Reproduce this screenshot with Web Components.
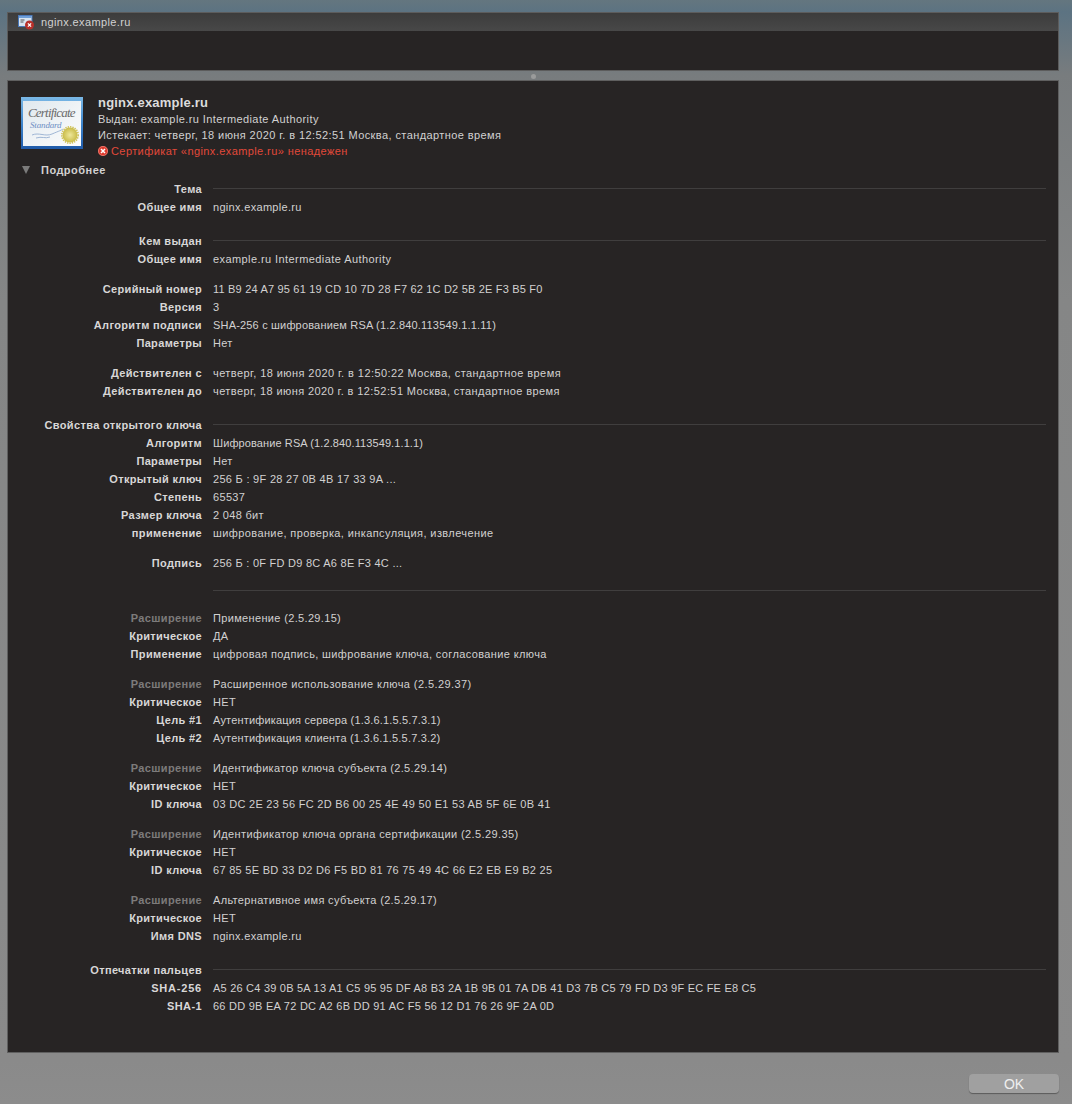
<!DOCTYPE html>
<html lang="ru">
<head>
<meta charset="utf-8">
<title>nginx.example.ru</title>
<style>
  html, body { margin: 0; height: 1104px; overflow: hidden; }
  body {
    font: 11px "Liberation Sans", Arial, sans-serif;
    color: #d2d1d1;
    background:
      linear-gradient(180deg, #64767f 0, #5c7382 12px, #787c7e 75px, #858686 300px, #8a8a8a 1060px, #8c8c8c 100%);
  }
</style>
</head>
<body>
<cert-sheet>
  <cert-tab slot="tab">nginx.example.ru</cert-tab>

  <cert-summary slot="head"
    name="nginx.example.ru"
    issuer="Выдан: example.ru Intermediate Authority"
    expires="Истекает: четверг, 18 июня 2020 г. в 12:52:51 Москва, стандартное время"
    error="Сертификат «nginx.example.ru» ненадежен"></cert-summary>
  <cert-disclosure slot="head">Подробнее</cert-disclosure>

  <cert-row head label="Тема"></cert-row>
  <cert-row t=".31" label="Общее имя">nginx.example.ru</cert-row>

  <cert-row head gap="16" label="Кем выдан"></cert-row>
  <cert-row t=".42" label="Общее имя">example.ru Intermediate Authority</cert-row>

  <cert-row gap="12" t=".19" label="Серийный номер">11 B9 24 A7 95 61 19 CD 10 7D 28 F7 62 1C D2 5B 2E F3 B5 F0</cert-row>
  <cert-row label="Версия">3</cert-row>
  <cert-row t=".18" label="Алгоритм подписи">SHA-256 с шифрованием RSA (1.2.840.113549.1.1.11)</cert-row>
  <cert-row label="Параметры">Нет</cert-row>

  <cert-row gap="12" t=".43" label="Действителен с">четверг, 18 июня 2020 г. в 12:50:22 Москва, стандартное время</cert-row>
  <cert-row t=".41" label="Действителен до">четверг, 18 июня 2020 г. в 12:52:51 Москва, стандартное время</cert-row>

  <cert-row head gap="16" label="Свойства открытого ключа"></cert-row>
  <cert-row t=".1" label="Алгоритм">Шифрование RSA (1.2.840.113549.1.1.1)</cert-row>
  <cert-row label="Параметры">Нет</cert-row>
  <cert-row t=".29" label="Открытый ключ">256 Б : 9F 28 27 0B 4B 17 33 9A ...</cert-row>
  <cert-row label="Степень">65537</cert-row>
  <cert-row label="Размер ключа">2 048 бит</cert-row>
  <cert-row t=".4" label="применение">шифрование, проверка, инкапсуляция, извлечение</cert-row>

  <cert-row gap="12" t=".26" label="Подпись">256 Б : 0F FD D9 8C A6 8E F3 4C ...</cert-row>
  <cert-row head gap="10" label=""></cert-row>

  <cert-row gap="9" muted t=".34" label="Расширение">Применение (2.5.29.15)</cert-row>
  <cert-row label="Критическое">ДА</cert-row>
  <cert-row t=".38" label="Применение">цифровая подпись, шифрование ключа, согласование ключа</cert-row>

  <cert-row gap="12" muted t=".42" label="Расширение">Расширенное использование ключа (2.5.29.37)</cert-row>
  <cert-row label="Критическое">НЕТ</cert-row>
  <cert-row t=".17" label="Цель #1">Аутентификация сервера (1.3.6.1.5.5.7.3.1)</cert-row>
  <cert-row t=".19" label="Цель #2">Аутентификация клиента (1.3.6.1.5.5.7.3.2)</cert-row>

  <cert-row gap="12" muted t=".34" label="Расширение">Идентификатор ключа субъекта (2.5.29.14)</cert-row>
  <cert-row label="Критическое">НЕТ</cert-row>
  <cert-row t=".29" label="ID ключа">03 DC 2E 23 56 FC 2D B6 00 25 4E 49 50 E1 53 AB 5F 6E 0B 41</cert-row>

  <cert-row gap="12" muted t=".39" label="Расширение">Идентификатор ключа органа сертификации (2.5.29.35)</cert-row>
  <cert-row label="Критическое">НЕТ</cert-row>
  <cert-row t=".29" label="ID ключа">67 85 5E BD 33 D2 D6 F5 BD 81 76 75 49 4C 66 E2 EB E9 B2 25</cert-row>

  <cert-row gap="12" muted t=".33" label="Расширение">Альтернативное имя субъекта (2.5.29.17)</cert-row>
  <cert-row label="Критическое">НЕТ</cert-row>
  <cert-row t=".31" label="Имя DNS">nginx.example.ru</cert-row>

  <cert-row head gap="16" label="Отпечатки пальцев"></cert-row>
  <cert-row t=".22" k=".8" label="SHA-256">A5 26 C4 39 0B 5A 13 A1 C5 95 95 DF A8 B3 2A 1B 9B 01 7A DB 41 D3 7B C5 79 FD D3 9F EC FE E8 C5</cert-row>
  <cert-row t=".25" k=".4" label="SHA-1">66 DD 9B EA 72 DC A2 6B DD 91 AC F5 56 12 D1 76 26 9F 2A 0D</cert-row>
</cert-sheet>

<script>
// ventana completa: lista arriba, divisor, panel de detalle y boton
class CertSheet extends HTMLElement{
    constructor(){
        super()
        this.attachShadow({mode: 'open'})
        this.shadowRoot.innerHTML = `
            <style>
                :host{ display: flex; flex-direction: column; box-sizing: border-box; height: 1104px; padding: 12px 13px 0 7px }
                .list{ height: 59px; box-sizing: border-box; background: #272424; border: 1px solid #5c5c5c }
                .split{ height: 9px; display: flex; align-items: center; justify-content: center }
                .split i{ width: 5px; height: 5px; border-radius: 50%; background: #9a9b9b; margin-top: 1px }
                .detail{ height: 973px; box-sizing: border-box; background: #272424; border: 1px solid #5f5f5f; padding: 12px 12px 0 13px }
                .foot{ display: flex; justify-content: flex-end; padding-top: 21px }
            </style>
            <div class="list"><slot name="tab"></slot></div>
            <div class="split"><i></i></div>
            <div class="detail">
                <slot name="head"></slot>
                <slot></slot>
            </div>
            <div class="foot"><cert-button>OK</cert-button></div>
        `
    }
}

class CertTab extends HTMLElement{
    constructor(){
        super()
        this.attachShadow({mode: 'open'})
        this.shadowRoot.innerHTML = `
            <style>
                :host{ display: flex; align-items: center; gap: 7px; height: 18px; padding-left: 10px; color: #d2d2d2; letter-spacing: .37px;
                       background: linear-gradient(#3c3c3c, #484848) }
                svg{ display: block }
            </style>
            <svg width="16" height="15" viewBox="0 0 16 15">
                <rect x="0.5" y="0.5" width="13.5" height="11" fill="#d8e4f0" stroke="#4a78b8"/>
                <rect x="1" y="1" width="12.5" height="2" fill="#6f9fd8"/>
                <path d="M2.5 5h4M2.5 7h3" stroke="#555" stroke-width="1"/>
                <circle cx="11.5" cy="10" r="4.5" fill="#b8302a"/>
                <path d="M9.9 8.4l3.2 3.2M13.1 8.4l-3.2 3.2" stroke="#fff" stroke-width="1.3"/>
            </svg>
            <span><slot></slot></span>
        `
    }
}

class CertSummary extends HTMLElement{
    constructor(){
        super()
        this.attachShadow({mode: 'open'})
    }
    connectedCallback(){
        this.render()
    }
    render(){
        const a = n => this.getAttribute(n)
        this.shadowRoot.innerHTML = `
            <style>
                :host{ display: flex; gap: 15px; height: 68px; align-items: flex-start; letter-spacing: .41px }
                svg.seal{ flex: none; margin-top: 4px; display: block }
                .txt{ display: flex; flex-direction: column; padding-top: 1px }
                .txt div{ height: 16px; line-height: 16px; white-space: nowrap }
                .name{ font-weight: bold; font-size: 13px; letter-spacing: .2px; color: #dcdcdc; height: 17px !important; line-height: 18px !important }
                .err{ color: #e2493a; display: flex; align-items: center; gap: 3px }
            </style>
            <svg class="seal" width="62" height="52" viewBox="0 0 62 52">
                <defs>
                    <linearGradient id="edge" x1="0" y1="0" x2="0" y2="1">
                        <stop offset="0" stop-color="#7ab8e6"/><stop offset=".5" stop-color="#3f86cc"/><stop offset="1" stop-color="#1f5aa8"/>
                    </linearGradient>
                    <linearGradient id="paper" x1="0" y1="0" x2="1" y2="1">
                        <stop offset="0" stop-color="#dfe8ee"/><stop offset="1" stop-color="#fdfdfd"/>
                    </linearGradient>
                    <radialGradient id="gold">
                        <stop offset="0" stop-color="#eee79a"/><stop offset="1" stop-color="#c9bb48"/>
                    </radialGradient>
                </defs>
                <rect width="62" height="52" fill="url(#edge)"/>
                <rect x="2" y="4" width="58" height="45" fill="url(#paper)"/>
                <text x="7" y="20" textLength="48" font-family="Liberation Serif, serif" font-style="italic" font-size="13" fill="#6a6a6a">Certificate</text>
                <text x="9" y="31" textLength="32" font-family="Liberation Serif, serif" font-style="italic" font-size="9" fill="#6d8fc4">Standard</text>
                <path d="M11 38c7-3 13 2 20-1s10-4 11-5M15 41c6-2 9 1 14-1" fill="none" stroke="#8aa6cc" stroke-width=".8"/>
                <circle cx="49" cy="38" r="7.5" fill="url(#gold)"/>
                <circle cx="49" cy="38" r="8.2" fill="none" stroke="#cfc25a" stroke-width="1.6" stroke-dasharray="1.4 1"/>
            </svg>
            <div class="txt">
                <div class="name">${a('name')}</div>
                <div>${a('issuer')}</div>
                <div>${a('expires')}</div>
                <div class="err">
                    <svg width="10" height="10" viewBox="0 0 10 10">
                        <circle cx="5" cy="5" r="5" fill="#dd3b2e"/>
                        <circle cx="5" cy="5" r="4.6" fill="none" stroke="#f09a90" stroke-width=".6"/>
                        <path d="M3 3l4 4M7 3l-4 4" stroke="#fff" stroke-width="1.5"/>
                    </svg>
                    <span>${a('error')}</span>
                </div>
            </div>
        `
    }
}

class CertDisclosure extends HTMLElement{
    constructor(){
        super()
        this.attachShadow({mode: 'open'})
        this.shadowRoot.innerHTML = `
            <style>
                :host{ display: flex; align-items: center; gap: 11px; height: 18px; margin-bottom: 1px; padding-left: 1px; font-weight: bold; letter-spacing: .47px }
                i{ width: 0; height: 0; border: 4.5px solid transparent; border-top: 8px solid #7b7b7b; border-bottom: 0 }
            </style>
            <i></i><span><slot></slot></span>
        `
    }
}

// fila etiqueta / valor; "head" dibuja la linea en vez del valor
// t y k ajustan el tracking del valor y de la etiqueta
class CertRow extends HTMLElement{
    static get styles(){
        return `
            :host{ display: grid; grid-template-columns: 181px 1fr; column-gap: 11px; height: 18px; line-height: 18px; white-space: nowrap }
            .k{ text-align: right; font-weight: bold; color: #d8d7d7 }
            :host([muted]) .k{ color: #7d7b7b }
            .rule{ height: 1px; background: #403e3e; margin-top: 8px }
        `
    }
    constructor(){
        super()
        this.attachShadow({mode: 'open'})
    }
    connectedCallback(){
        const gap = this.getAttribute('gap')
        if(gap) this.style.marginTop = gap + 'px'
        const t = this.getAttribute('t') || '.32'
        const k = this.getAttribute('k') || '.35'
        const value = this.hasAttribute('head') ? '<div class="rule"></div>' : `<div style="letter-spacing:${t}px"><slot></slot></div>`
        this.shadowRoot.innerHTML = `
            <style>${CertRow.styles}</style>
            <div class="k" style="letter-spacing:${k}px">${this.getAttribute('label')}</div>
            ${value}
        `
    }
}

class CertButton extends HTMLElement{
    constructor(){
        super()
        this.attachShadow({mode: 'open'})
        this.shadowRoot.innerHTML = `
            <style>
                :host{ display: flex; align-items: center; justify-content: center; box-sizing: border-box; width: 90px; height: 19px; border-radius: 4px;
                       background: #a0a0a0; color: #efefef; font-size: 14px; box-shadow: 0 1px 1px rgba(0,0,0,.35) }
            </style>
            <slot></slot>
        `
    }
}

customElements.define('cert-sheet', CertSheet)
customElements.define('cert-tab', CertTab)
customElements.define('cert-summary', CertSummary)
customElements.define('cert-disclosure', CertDisclosure)
customElements.define('cert-row', CertRow)
customElements.define('cert-button', CertButton)
</script>
</body>
</html>
